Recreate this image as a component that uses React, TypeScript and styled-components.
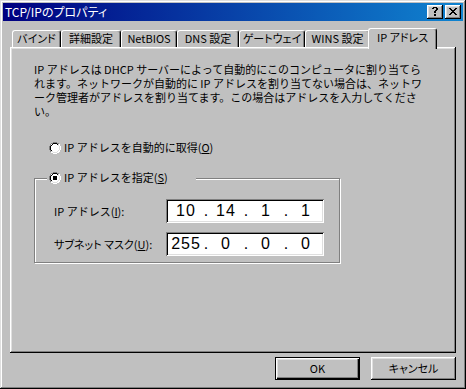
import React from 'react';
import styled, { createGlobalStyle, css } from 'styled-components';

const Global = createGlobalStyle`
  html, body { margin: 0; padding: 0; background: #c0c0c0; }
  body {
    font-family: "Noto Sans CJK JP", "Noto Sans", sans-serif;
    font-size: 11px;
    color: #000;
  }
`;

const Window = styled.div`
  width: 466px;
  height: 389px;
  box-sizing: border-box;
  padding: 3px;
  background: #c0c0c0;
  box-shadow: inset -1px -1px #000, inset 1px 1px #dfdfdf, inset -2px -2px #808080, inset 2px 2px #fff;
  display: flex;
  flex-direction: column;
`;

const TitleBar = styled.div`
  height: 18px;
  flex: none;
  display: flex;
  align-items: center;
  justify-content: space-between;
  background: linear-gradient(90deg, #000080, #1084d0);
  padding: 0 2px;
`;

const TitleText = styled.span`
  color: #fff;
  font-size: 12px;
  font-feature-settings: "palt";
  line-height: 18px;
  white-space: nowrap;
`;

const TitleButtons = styled.div`
  display: flex;
  gap: 2px;
`;

const TitleButton = styled.div`
  width: 16px;
  height: 14px;
  box-sizing: border-box;
  background: #c0c0c0;
  box-shadow: inset -1px -1px #000, inset 1px 1px #fff, inset -2px -2px #808080, inset 2px 2px #dfdfdf;
  display: flex;
  align-items: center;
  justify-content: center;
  padding: 0 1px 1px 0;
`;

const Body = styled.div`
  flex: 1;
  display: flex;
  flex-direction: column;
  padding: 7px 7px 0 7px;
`;

const TabStrip = styled.div`
  display: flex;
  align-items: flex-end;
  height: 19px;
  padding-left: 2px;
  position: relative;
  z-index: 1;
`;

const Tab = styled.div<{ $w: number; $active?: boolean }>`
  box-sizing: border-box;
  width: ${p => p.$w}px;
  height: 17px;
  background: #c0c0c0;
  border-top: 1px solid #fff;
  border-left: 1px solid #fff;
  border-right: 1px solid #000;
  border-top-left-radius: 3px;
  border-top-right-radius: 3px;
  box-shadow: inset -1px 0 #808080;
  display: flex;
  align-items: center;
  justify-content: center;
  white-space: nowrap;
  font-feature-settings: "palt";
  line-height: 13px;
  padding-bottom: 1px;
  ${p => p.$active && css`
    height: 21px;
    margin-left: -2px;
    margin-bottom: -2px;
    padding-bottom: 4px;
  `}
`;

const Panel = styled.div`
  height: 306px;
  flex: none;
  box-sizing: border-box;
  box-shadow: inset -1px -1px #000, inset 1px 1px #fff, inset -2px -2px #808080, inset 2px 2px #dfdfdf;
  padding: 15px 0 0 24px;
  display: flex;
  flex-direction: column;
  align-items: flex-start;
`;

const Desc = styled.p`
  margin: 0;
  line-height: 14px;
  white-space: nowrap;
`;

const RadioRow = styled.div<{ $indent?: number }>`
  display: flex;
  align-items: center;
  gap: 3px;
  height: 13px;
  line-height: 13px;
  white-space: nowrap;
  margin-top: 23px;
  padding-left: ${p => p.$indent ?? 0}px;
`;

const RadioSvg = styled.svg`
  flex: none;
  display: block;
`;

const Mn = styled.span`
  text-decoration: underline;
  text-underline-offset: 1px;
`;

const GroupBox = styled.div`
  margin-top: 24px;
  width: 306px;
  height: 85px;
  box-sizing: border-box;
  border: 1px solid #808080;
  box-shadow: 1px 1px 0 #fff, inset 1px 1px 0 #fff;
  display: flex;
  flex-direction: column;
  align-items: flex-start;
`;

const Legend = styled.div`
  margin: -8px 0 0 12px;
  padding: 0 28px 0 2px;
  height: 13px;
  line-height: 13px;
  background: #c0c0c0;
  display: flex;
  align-items: center;
  gap: 3px;
  white-space: nowrap;
`;

const Fields = styled.div`
  margin: 15px 0 0 19px;
  display: grid;
  grid-template-columns: 112px 158px;
  row-gap: 9px;
  align-items: center;
`;

const FieldLabel = styled.span<{ $tight?: boolean }>`
  white-space: nowrap;
  line-height: 13px;
  ${p => p.$tight && css`font-feature-settings: "palt";`}
`;

const IpField = styled.div`
  height: 24px;
  box-sizing: border-box;
  background: #fff;
  box-shadow: inset 1px 1px #808080, inset -1px -1px #fff, inset 2px 2px #000, inset -2px -2px #dfdfdf;
  display: flex;
  align-items: center;
  padding-left: 5px;
  font-family: "Liberation Sans", "DejaVu Sans", sans-serif;
  font-size: 16px;
  line-height: 20px;
`;

const Octet = styled.span`
  width: 30px;
  text-align: center;
  letter-spacing: 1px;
`;

const Dot = styled.span`
  width: 10px;
  text-align: center;
`;

const ButtonRow = styled.div`
  display: flex;
  justify-content: flex-end;
  gap: 11px;
  margin-top: 4px;
`;

const Button = styled.div<{ $default?: boolean }>`
  width: 85px;
  height: 23px;
  box-sizing: border-box;
  display: flex;
  align-items: center;
  justify-content: center;
  font-feature-settings: "palt";
  line-height: 13px;
  ${p => p.$default ? css`
    box-shadow: inset 0 0 0 1px #000, inset 2px 2px #fff, inset -2px -2px #000, inset -3px -3px #808080, inset 3px 3px #dfdfdf;
  ` : css`
    box-shadow: inset -1px -1px #000, inset 1px 1px #fff, inset -2px -2px #808080, inset 2px 2px #dfdfdf;
  `}
`;

const Radio = ({ checked }: { checked?: boolean }) => (
  <RadioSvg width="12" height="12" viewBox="0 0 12 12" shapeRendering="crispEdges">
    <circle cx="6" cy="6" r="5" fill="#fff" />
    <path d="M2.11 9.89 A5.5 5.5 0 0 1 9.89 2.11" stroke="#808080" fill="none" />
    <path d="M9.89 2.11 A5.5 5.5 0 0 1 2.11 9.89" stroke="#fff" fill="none" />
    <path d="M2.82 9.18 A4.5 4.5 0 0 1 9.18 2.82" stroke="#000" fill="none" />
    <path d="M9.18 2.82 A4.5 4.5 0 0 1 2.82 9.18" stroke="#dfdfdf" fill="none" />
    {checked && <rect x="4" y="4" width="4" height="4" fill="#000" />}
  </RadioSvg>
);

const HelpGlyph = () => (
  <svg width="6" height="9" viewBox="0 0 6 9" shapeRendering="crispEdges">
    <path fill="#000" d="M1 0h4v1H1zM0 1h2v1H0zM4 1h2v2H4zM3 3h2v1H3zM2 4h2v2H2zM2 7h2v2H2z" />
  </svg>
);

const CloseGlyph = () => (
  <svg width="8" height="7" viewBox="0 0 8 7" shapeRendering="crispEdges">
    <path fill="#000" d="M0 0h2v1H0zM6 0h2v1H6zM1 1h2v1H1zM5 1h2v1H5zM2 2h4v1H2zM3 3h2v1H3zM2 4h4v1H2zM1 5h2v1H1zM5 5h2v1H5zM0 6h2v1H0zM6 6h2v1H6z" />
  </svg>
);

const tabs = [
  { label: 'バインド', w: 49 },
  { label: '詳細設定', w: 60 },
  { label: 'NetBIOS', w: 56 },
  { label: 'DNS 設定', w: 62 },
  { label: 'ゲートウェイ', w: 66 },
  { label: 'WINS 設定', w: 65 },
  { label: 'IP アドレス', w: 69, active: true },
];

const IpValue = ({ octets }: { octets: string[] }) => (
  <IpField>
    {octets.map((o, i) => (
      <React.Fragment key={i}>
        {i > 0 && <Dot>.</Dot>}
        <Octet>{o}</Octet>
      </React.Fragment>
    ))}
  </IpField>
);

export default function App() {
  return (
    <>
      <Global />
      <Window>
        <TitleBar>
          <TitleText>TCP/IPのプロパティ</TitleText>
          <TitleButtons>
            <TitleButton><HelpGlyph /></TitleButton>
            <TitleButton><CloseGlyph /></TitleButton>
          </TitleButtons>
        </TitleBar>
        <Body>
          <TabStrip>
            {tabs.map(t => (
              <Tab key={t.label} $w={t.w} $active={t.active}>{t.label}</Tab>
            ))}
          </TabStrip>
          <Panel>
            <Desc>
              IP アドレスは DHCP サーバーによって自動的にこのコンピュータに割り当てら<br />
              れます。ネットワークが自動的に IP アドレスを割り当てない場合は、ネットワ<br />
              ーク管理者がアドレスを割り当てます。この場合はアドレスを入力してくださ<br />
              い。
            </Desc>
            <RadioRow $indent={15}>
              <Radio />
              <span>IP アドレスを自動的に取得(<Mn>O</Mn>)</span>
            </RadioRow>
            <GroupBox>
              <Legend>
                <Radio checked />
                <span>IP アドレスを指定(<Mn>S</Mn>)</span>
              </Legend>
              <Fields>
                <FieldLabel>IP アドレス(<Mn>I</Mn>):</FieldLabel>
                <IpValue octets={['10', '14', '1', '1']} />
                <FieldLabel $tight>サブネット マスク(<Mn>U</Mn>):</FieldLabel>
                <IpValue octets={['255', '0', '0', '0']} />
              </Fields>
            </GroupBox>
          </Panel>
          <ButtonRow>
            <Button $default>OK</Button>
            <Button>キャンセル</Button>
          </ButtonRow>
        </Body>
      </Window>
    </>
  );
}
